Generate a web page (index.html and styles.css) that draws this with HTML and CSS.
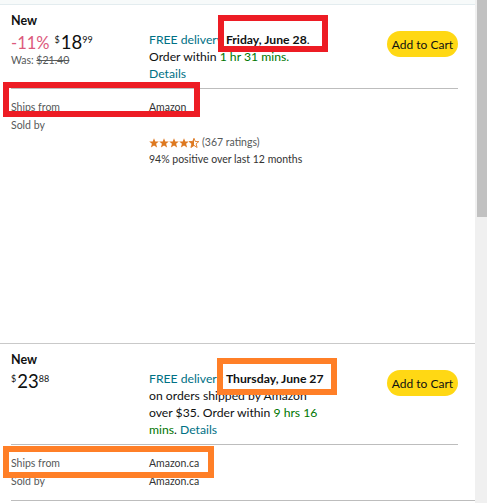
FILE: index.html
```html
<!DOCTYPE html>
<html lang="en">

<head>
    <meta charset="UTF-8" />
    <meta name="viewport" content="width=device-width, initial-scale=1.0" />
    <title>Other sellers</title>
    <link rel="stylesheet" href="styles.css">
</head>

<body>
    <div class="page">
        <main class="offers">
            <!-- Offer 1 -->
            <section class="offer offer-first">
                <h3 class="condition">New</h3>
                <div class="offer-row">
                    <div class="price-col">
                        <div class="price-line">
                            <span class="savings">-11%</span>
                            <span class="price"><span class="sym">$</span>18<span class="frac">99</span></span>
                        </div>
                        <div class="was">Was: <s>$21.40</s></div>
                    </div>
                    <div class="delivery">
                        <span class="link">FREE delivery</span> <b>Friday, June 28</b>. Order within <span class="green">1 hr 31 mins.</span> <span class="link">Details</span>
                    </div>
                    <div class="cart">
                        <button class="cart-btn">Add to Cart</button>
                    </div>
                </div>
                <hr class="divider">
                <dl class="details">
                    <dt>Ships from</dt>
                    <dd>Amazon</dd>
                    <dt>Sold by</dt>
                    <dd>
                        <div class="seller">&nbsp;</div>
                        <div class="rating">
                            <svg class="stars" width="51" height="10" viewBox="0 0 51 10">
                                <defs>
                                    <polygon id="star" points="5,0.3 6.3,3.5 9.8,3.6 7.1,5.8 8.1,9.5 5,7.4 1.9,9.5 2.9,5.8 0.2,3.6 3.7,3.5" />
                                    <linearGradient id="half-fill" x1="0" x2="1" y1="0" y2="0">
                                        <stop offset="0.55" stop-color="#de7921" />
                                        <stop offset="0.55" stop-color="#ffffff" />
                                    </linearGradient>
                                </defs>
                                <use href="#star" x="0" fill="#de7921" />
                                <use href="#star" x="10" fill="#de7921" />
                                <use href="#star" x="20" fill="#de7921" />
                                <use href="#star" x="30" fill="#de7921" />
                                <use href="#star" x="40" fill="url(#half-fill)" stroke="#de7921" stroke-width="0.9" />
                            </svg>
                            <span>(367 ratings)</span>
                        </div>
                        <div>94% positive over last 12 months</div>
                    </dd>
                </dl>

                <span class="mark mark-red mark-date-1"></span>
                <span class="mark mark-red mark-ships-1"></span>
            </section>

            <div class="offer-spacer"></div>

            <!-- Offer 2 -->
            <section class="offer offer-second">
                <h3 class="condition">New</h3>
                <div class="offer-row">
                    <div class="price-col">
                        <div class="price-line">
                            <span class="price"><span class="sym">$</span>23<span class="frac">88</span></span>
                        </div>
                    </div>
                    <div class="delivery">
                        <span class="link">FREE delivery</span> <b>Thursday, June 27</b> on orders shipped by Amazon over $35. Order within <span class="green">9 hrs 16 mins</span>. <span class="link">Details</span>
                    </div>
                    <div class="cart">
                        <button class="cart-btn">Add to Cart</button>
                    </div>
                </div>
                <hr class="divider">
                <dl class="details">
                    <dt>Ships from</dt>
                    <dd>Amazon.ca</dd>
                    <dt>Sold by</dt>
                    <dd>Amazon.ca</dd>
                </dl>
                <hr class="divider divider-end">

                <span class="mark mark-orange mark-date-2"></span>
                <span class="mark mark-orange mark-ships-2"></span>
            </section>
        </main>

        <div class="scrollbar">
            <div class="scrollbar-thumb"></div>
        </div>
    </div>
</body>

</html>
```

FILE: styles.css
```css
* {
    margin: 0;
    padding: 0;
    box-sizing: border-box;
}

body {
    font-family: Lato, 'Liberation Sans', Arial, sans-serif;
    color: #0f1111;
    background-color: #ffffff;
    overflow: hidden;
}

.page {
    display: flex;
    height: 503px;
}

.offers {
    width: 475px;
    padding-top: 4px;
    background: linear-gradient(#f7fafa, #f7fafa) top / 100% 4px no-repeat;
}

/* Fake scrollbar */
.scrollbar {
    width: 12px;
    padding-left: 2px;
    background-color: #f0f0f0;
}

.scrollbar-thumb {
    height: 217px;
    background-color: #c1c1c1;
}

/* Offer block */
.offer {
    position: relative;
    padding: 8px 17px 8px 11px;
}

.offer-first {
    border-top: 1px solid #e3ecef;
}

.offer-second {
    border-top: 1px solid #c9c9c9;
    padding-bottom: 0;
}

.offer-spacer {
    height: 167px;
}

.condition {
    font-size: 12.5px;
    font-weight: 700;
    line-height: 16px;
}

.offer-row {
    display: flex;
}

.price-col {
    width: 138px;
}

.price-line {
    height: 22px;
    line-height: 22px;
}

.savings {
    color: #dc5a7c;
    font-size: 16.5px;
    margin-right: 1px;
}

.price {
    font-size: 18.5px;
}

.sym,
.frac {
    font-size: 9px;
    vertical-align: 6px;
}

.sym {
    margin-right: 1px;
}

.was {
    font-size: 10.5px;
    line-height: 14px;
    color: #565959;
    margin-top: 2px;
}

.delivery {
    width: 177px;
    font-size: 12.2px;
    line-height: 17px;
    padding-top: 2px;
}

.link {
    color: #007185;
}

.green {
    color: #007600;
}

.cart {
    flex: 1;
    display: flex;
    justify-content: flex-end;
    align-items: flex-start;
    padding-top: 2px;
}

.cart-btn {
    width: 71px;
    height: 26px;
    border: none;
    border-radius: 13px;
    background-color: #ffd814;
    font-family: inherit;
    font-size: 12px;
    color: #0f1111;
}

.divider {
    border: none;
    border-top: 1px solid #bdbdbd;
    margin-top: 6px;
}

.divider-end {
    margin-top: 10px;
    margin-right: -17px;
}

.details {
    display: grid;
    grid-template-columns: 138px 1fr;
    row-gap: 1px;
    margin-top: 10px;
    font-size: 10.5px;
    line-height: 17px;
    color: #565959;
}

.details dd {
    color: #333333;
}

.rating {
    display: flex;
    align-items: center;
    gap: 2px;
    color: #565959;
}

.stars {
    display: block;
}

/* Annotation boxes drawn over the screenshot */
.mark {
    position: absolute;
    border: 6px solid;
    pointer-events: none;
}

.mark-red {
    border-color: #ed1c24;
}

.mark-orange {
    border-color: #ff7f27;
}

.mark-date-1 {
    left: 218px;
    top: 10px;
    width: 110px;
    height: 37px;
}

.mark-ships-1 {
    left: 3px;
    top: 77px;
    width: 197px;
    height: 35px;
}

.mark-date-2 {
    left: 217px;
    top: 14px;
    width: 120px;
    height: 37px;
}

.mark-ships-2 {
    left: 3px;
    top: 102px;
    width: 211px;
    height: 32px;
}
```
